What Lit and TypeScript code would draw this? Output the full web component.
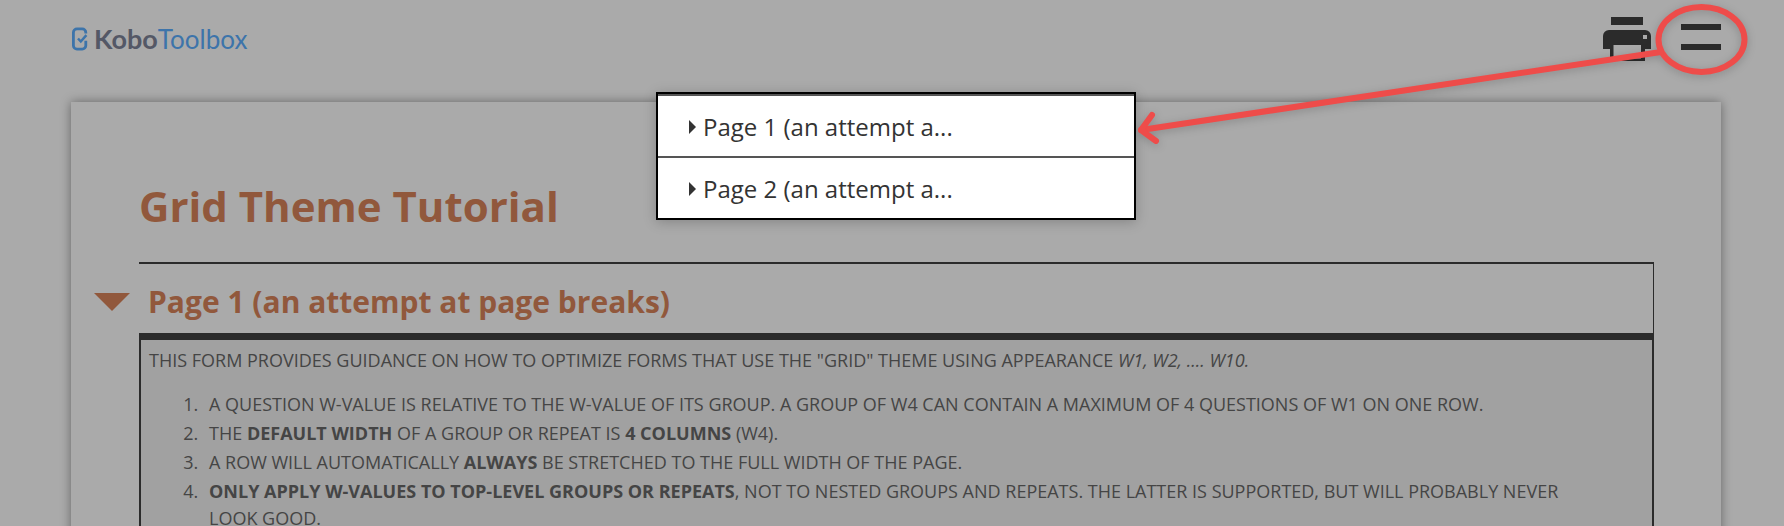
import { LitElement, html, css } from "lit";
import { customElement, property, state } from "lit/decorators.js";

@customElement("form-header")
class FormHeader extends LitElement {
  static styles = css`
    :host {
      display: flex;
      justify-content: space-between;
      align-items: flex-start;
      height: 102px;
      padding: 17px 63px 0 71px;
      box-sizing: border-box;
    }
    .logo {
      display: flex;
      align-items: center;
      gap: 6px;
      margin-top: 6px;
      font: 400 26px/32px Lato, sans-serif;
      color: #3d74aa;
      text-decoration: none;
    }
    .logo b {
      font-size: 27px;
      font-weight: 700;
      color: #545866;
    }
    .actions {
      display: flex;
      align-items: flex-start;
      gap: 30px;
    }
    button {
      display: block;
      padding: 0;
      border: 0;
      background: none;
      color: #2b2b2b;
      cursor: pointer;
    }
    svg {
      display: block;
    }
  `;

  render() {
    return html`
      <a class="logo" href="#" aria-label="KoboToolbox">
        <svg width="17" height="24" viewBox="0 0 17 24" fill="none" stroke="#3d74aa">
          <path d="M14.800 6.500V5.500a3.600 3.600 0 0 0-3.600-3.600H6A3.600 3.600 0 0 0 2.400 5.500v13A3.600 3.600 0 0 0 6 22.100h5.200a3.600 3.600 0 0 0 3.600-3.600v-4.800" stroke-width="2.800" />
          <path d="M7 11.500l2.800 3 5.600-6.300" stroke-width="2.500" />
        </svg>
        <span><b>Kobo</b>Toolbox</span>
      </a>
      <div class="actions">
        <button aria-label="Print">
          <svg width="48" height="44" viewBox="0 0 48 44" fill="currentColor">
            <path d="M8 0h32v8H8z" />
            <path fill-rule="evenodd" d="M6 13h36a6 6 0 0 1 6 6v13h-6v12H7V32H0V19a6 6 0 0 1 6-6zM40 18v4h4v-4zM10.500 28v13.500H38V28z" />
          </svg>
        </button>
        <button aria-label="Menu">
          <svg width="40" height="40" viewBox="0 0 40 40" fill="currentColor">
            <path d="M0 7h40v6H0zM0 27h40v6H0z" />
          </svg>
        </button>
      </div>
    `;
  }
}

@customElement("page-menu")
class PageMenu extends LitElement {
  @property({ type: Array }) pages: string[] = [];

  static styles = css`
    :host {
      display: block;
      width: 480px;
      box-sizing: border-box;
      border: 2px solid #000;
      background: #fff;
      box-shadow: 0 2px 12px rgba(0, 0, 0, 0.22);
    }
    ul {
      margin: 0;
      padding: 0;
      list-style: none;
    }
    li {
      border-top: 2px solid #555;
    }
    a {
      display: flex;
      align-items: center;
      gap: 7px;
      padding: 15px 31px 13px;
      font-size: 24px;
      line-height: 32px;
      color: #333;
      text-decoration: none;
    }
    svg {
      flex: none;
    }
  `;

  render() {
    return html`
      <ul>
        ${this.pages.map(
          (page) => html`
            <li>
              <a href="#">
                <svg width="7" height="14" viewBox="0 0 7 14"><path d="M0 0l7 7-7 7z" fill="#333" /></svg>
                <span>${page}</span>
              </a>
            </li>
          `
        )}
      </ul>
    `;
  }
}

@customElement("form-group")
class FormGroup extends LitElement {
  @property() heading = "";
  @state() private open = true;

  static styles = css`
    :host {
      display: block;
      border-top: 2px solid #2b2b2b;
    }
    .head {
      display: flex;
      align-items: center;
      gap: 18px;
      height: 69px;
      padding-top: 7px;
      box-sizing: border-box;
      margin-left: -45px;
      border-right: 1px solid #2b2b2b;
    }
    button {
      padding: 0;
      border: 0;
      background: none;
      cursor: pointer;
    }
    svg {
      display: block;
    }
    h2 {
      margin: 0;
      font-size: 30px;
      line-height: 40px;
      font-weight: 700;
      color: #91583c;
    }
    .body {
      border: 2px solid #2b2b2b;
      border-top-width: 7px;
      padding: 7px 70px 16px 8px;
      background: #a1a1a1;
      color: #454545;
      font-size: 18px;
      line-height: 27px;
      text-transform: uppercase;
    }
  `;

  render() {
    return html`
      <div class="head">
        <button aria-label="Toggle group" aria-expanded=${this.open} @click=${() => (this.open = !this.open)}>
          <svg width="36" height="18" viewBox="0 0 36 18"><path d="M0 0h36L18 18z" fill="#91583c" /></svg>
        </button>
        <h2>${this.heading}</h2>
      </div>
      <div class="body" ?hidden=${!this.open}><slot></slot></div>
    `;
  }
}

@customElement("app-root")
class AppRoot extends LitElement {
  static styles = css`
    :host {
      display: block;
      position: relative;
      height: 100vh;
      overflow: hidden;
      background: #aaa;
      font-family: "Open Sans", "Noto Sans", sans-serif;
    }
    main {
      min-height: 100%;
      box-sizing: border-box;
      margin: 0 63px 0 71px;
      padding: 75px 67px 40px 68px;
      box-shadow: 0 0 10px rgba(0, 0, 0, 0.4);
    }
    h1 {
      margin: 0 0 27px;
      font-size: 42px;
      line-height: 58px;
      font-weight: 700;
      color: #91583c;
    }
    p {
      margin: 0 0 17px;
    }
    ol {
      margin: 0;
      padding-left: 54px;
    }
    li {
      margin-bottom: 2px;
      padding-left: 6px;
    }
    page-menu {
      position: absolute;
      top: 92px;
      right: 648px;
    }
    .callout {
      position: absolute;
      top: 0;
      right: 0;
      pointer-events: none;
      filter: drop-shadow(0 2px 4px rgba(0, 0, 0, 0.2));
    }
  `;

  render() {
    return html`
      <form-header></form-header>
      <main>
        <h1>Grid Theme Tutorial</h1>
        <form-group heading="Page 1 (an attempt at page breaks)">
          <p>This form provides guidance on how to optimize forms that use the "grid" theme using appearance <em>w1, w2, .... w10.</em></p>
          <ol>
            <li>A question w-value is relative to the w-value of its group. A group of w4 can contain a maximum of 4 questions of w1 on one row.</li>
            <li>The <strong>default width</strong> of a group or repeat is <strong>4 columns</strong> (w4).</li>
            <li>A row will automatically <strong>always</strong> be stretched to the full width of the page.</li>
            <li><strong>Only apply w-values to top-level groups or repeats</strong>, not to nested groups and repeats. The latter is supported, but will probably never look good.</li>
          </ol>
        </form-group>
      </main>
      <page-menu .pages=${["Page 1 (an attempt a...", "Page 2 (an attempt a..."]}></page-menu>
      <svg class="callout" width="660" height="160" viewBox="1124 0 660 160" fill="none" stroke="#ee4c4a" stroke-width="6" stroke-linecap="round" stroke-linejoin="round">
        <ellipse cx="1701.500" cy="39.500" rx="43" ry="32.500" />
        <path d="M1661 52L1141 130" />
        <path d="M1152 115L1141 130L1156 141" />
      </svg>
    `;
  }
}
